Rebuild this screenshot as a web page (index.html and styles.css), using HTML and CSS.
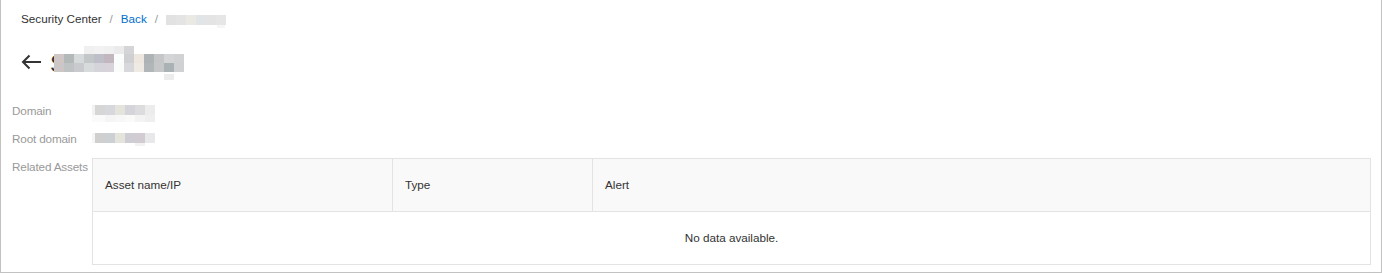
FILE: index.html
```html
<!DOCTYPE html>
<html lang="en">
<head>
<meta charset="utf-8">
<title>Security Center</title>
<link rel="stylesheet" href="styles.css">
</head>
<body>
<div class="page">
  <nav class="breadcrumb">
    <span class="crumb">Security Center</span>
    <span class="sep">/</span>
    <a class="crumb link" href="#">Back</a>
    <span class="sep">/</span>
    <span class="mosaic mosaic-crumb"><span class="m-row m-crumb-1"></span><span class="m-row m-crumb-2"></span></span>
  </nav>

  <header class="title-row">
    <button class="back-btn" type="button" aria-label="Back">
      <svg width="20" height="16" viewBox="0 0 20 16" fill="none" stroke="#333" stroke-width="2">
        <path d="M20 8H2.5"/>
        <path d="M8.5 1.5L2 8l6.5 6.5"/>
      </svg>
    </button>
    <h1 class="title">S<span class="mosaic mosaic-title"><span class="m-row m-title-0"></span><span class="m-row m-title-1"></span><span class="m-row m-title-2"></span><span class="m-row m-title-3"></span></span></h1>
  </header>

  <dl class="info">
    <dt class="label">Domain</dt>
    <dd class="value value-line"><span class="mosaic mosaic-val"><span class="m-row m-dom-1"></span><span class="m-row m-dom-2"></span></span></dd>
    <dt class="label">Root domain</dt>
    <dd class="value value-line"><span class="mosaic mosaic-val"><span class="m-row m-root-1"></span><span class="m-row m-root-2"></span></span></dd>
    <dt class="label">Related Assets</dt>
    <dd class="value">
      <table class="assets">
        <colgroup><col class="c1"><col class="c2"><col class="c3"></colgroup>
        <thead>
          <tr><th>Asset name/IP</th><th>Type</th><th>Alert</th></tr>
        </thead>
        <tbody>
          <tr><td class="empty" colspan="3">No data available.</td></tr>
        </tbody>
      </table>
    </dd>
  </dl>
</div>
</body>
</html>
```

FILE: styles.css
```css
* { box-sizing: border-box; }
html, body { margin: 0; padding: 0; background: #fff; }
body {
  font-family: "Liberation Sans", Arial, sans-serif;
  font-size: 11.7px;
  color: #333;
}
.page {
  width: 1382px;
  height: 273px;
  border: 1px solid #c2c2c2;
  border-top: none;
  background: #fff;
  overflow: hidden;
}

/* breadcrumb */
.breadcrumb {
  display: flex;
  align-items: flex-start;
  padding: 10px 20px 0;
  height: 28px;
  line-height: 18px;
}
.crumb { color: #333; text-decoration: none; }
.crumb.link { color: #0070cc; }
.sep { color: #999; margin: 0 8px; }

/* mosaic placeholders for obscured text */
.mosaic { display: inline-flex; flex-direction: column; }
.m-row { display: block; }
.mosaic-crumb { margin-top: 5px; }
.m-crumb-1 {
  width: 60px; height: 10px;
  background: linear-gradient(to right, #e2e2e2 0 10px, #e4e4e4 10px 20px, #ebe9e4 20px 30px, #e1e5e8 30px 40px, #e4e4e4 40px 50px, #e6e6e6 50px 60px);
}
.m-crumb-2 { margin-left: 51px; width: 8px; height: 3px; background: #f6f6f6; }

/* title row */
.title-row {
  display: flex;
  align-items: center;
  height: 40px;
  margin-top: 16px;
  padding-left: 20px;
}
.back-btn {
  display: flex;
  border: 0;
  padding: 0;
  margin: 0 9px 5px 0;
  background: none;
  cursor: pointer;
}
.title {
  position: relative;
  margin: 0;
  font-size: 24px;
  font-weight: normal;
  line-height: 32px;
  color: #333;
}
.mosaic-title {
  position: absolute;
  left: 4px;
  top: -2px;
}
.m-title-0 {
  margin-left: 30px; width: 50px; height: 8px;
  background: linear-gradient(to right, #f0f0f0 0 10px, #f2f2f2 10px 20px, #f0f0f0 20px 30px, #ebebeb 30px 40px, #d5d5d7 40px 50px);
}
.m-title-1 {
  width: 130px; height: 9px;
  background: linear-gradient(to right, #cfc6c6 0 10px, #b3b8b9 10px 20px, #d6dadb 20px 30px, #c3c7c8 30px 40px, #bfbfca 40px 50px, #c2b6bf 50px 60px, #fbfdfd 60px 70px, #cfd0d1 70px 80px, #ede7df 80px 90px, #aeb4b5 90px 100px, #c4c6c8 100px 110px, #d3d5d7 110px 120px, #d0d2d4 120px 130px);
}
.m-title-2 {
  width: 130px; height: 9px;
  background: linear-gradient(to right, #cdc6c7 0 10px, #bfc3c3 10px 20px, #c8cacd 20px 30px, #d8dbdb 30px 40px, #d4d4da 40px 50px, #d8d2da 50px 60px, #fafcfc 60px 70px, #d8d8dc 70px 80px, #efebe4 80px 90px, #b1b7b8 90px 100px, #c6c7c9 100px 110px, #abb2b5 110px 120px, #cfd1d3 120px 130px);
}
.m-title-3 { margin: 2px 0 0 110px; width: 10px; height: 6px; background: #ececec; }

/* info list */
.info {
  display: grid;
  grid-template-columns: 80px 1fr;
  row-gap: 10px;
  margin: 18px 10px 0 0;
  padding-left: 11px;
  line-height: 18px;
}
.label { color: #999; margin: 0; white-space: nowrap; letter-spacing: -0.15px; }
.value { margin: 0; min-height: 18px; }
.value-line { height: 18px; }
.mosaic-val { margin-top: 3px; vertical-align: top; }
.m-dom-1 {
  width: 63px; height: 10px;
  background: linear-gradient(to right, #f2f2f2 0 3px, #d6d6d6 3px 13px, #d6d8dc 13px 23px, #e4e3dc 23px 33px, #d4d4da 33px 43px, #dcdcde 43px 53px, #ececec 53px 63px);
}
.m-dom-2 {
  width: 63px; height: 7px;
  background: linear-gradient(to right, #fafafa 0 13px, #f5f5f5 13px 23px, #f7f7f7 23px 33px, #fafaf8 33px 43px, #f3f3f3 43px 53px, #efefef 53px 63px);
}
.m-root-1 {
  width: 63px; height: 10px;
  background: linear-gradient(to right, #f5f5f5 0 3px, #cfcfcf 3px 13px, #cdd0d3 13px 23px, #e4e3dc 23px 33px, #cdcdd3 33px 43px, #d2ccd2 43px 53px, #e8e8ea 53px 63px);
}
.m-root-2 { margin-left: 43px; width: 10px; height: 3px; background: #f2f2f2; }

/* table */
.assets {
  width: 100%;
  border-collapse: collapse;
  table-layout: fixed;
  border: 1px solid #e3e3e3;
}
.c1 { width: 300px; }
.c2 { width: 200px; }
.assets th, .assets td {
  height: 53px;
  padding: 0 12px;
  border: 1px solid #e3e3e3;
  text-align: left;
  font-weight: normal;
  color: #333;
}
.assets thead th { background: #f9f9f9; }
.assets td.empty { text-align: center; }
```
